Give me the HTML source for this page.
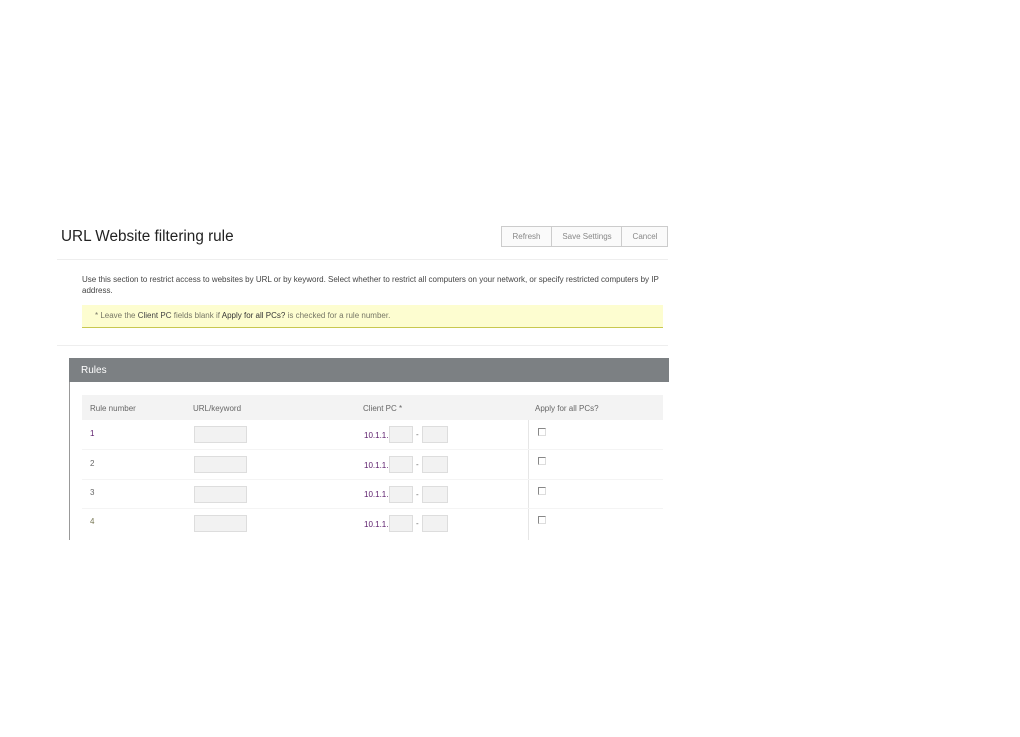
<!DOCTYPE html>
<html><head><style>
body{margin:0;width:1020px;height:737px;background:#fff;font-family:"Liberation Sans",sans-serif;position:relative;overflow:hidden}
.a{position:absolute}
.t{font-size:8px;color:#666}
.in{position:absolute;background:#f2f2f2;border:1px solid #ddd;box-sizing:border-box}
.cb{position:absolute;width:8px;height:8px;border:1px solid #888;border-right-color:#ddd;border-bottom-color:#ddd;box-sizing:border-box}
.ip{font-size:8px;color:#5a1a6a}
</style></head><body>
<div class="a" style="left:61px;top:228px;font-size:15.3px;color:#222">URL Website filtering rule</div>
<div class="a" style="left:501px;top:226px;width:167px;height:21px;border:1px solid #ccc;box-sizing:border-box;background:#fafafa;font-size:8px;color:#888">
<span class="a" style="left:0;width:49px;top:5px;text-align:center">Refresh</span>
<span class="a" style="left:49px;top:0;width:1px;height:19px;background:#ccc"></span>
<span class="a" style="left:50px;width:70px;top:5px;text-align:center">Save Settings</span>
<span class="a" style="left:119px;top:0;width:1px;height:19px;background:#ccc"></span>
<span class="a" style="left:120px;width:46px;top:5px;text-align:center">Cancel</span>
</div>
<div class="a" style="left:57px;top:259px;width:611px;height:1px;background:#eee"></div>
<div class="a t" style="left:82px;top:274px;width:590px;line-height:11px;color:#444">Use this section to restrict access to websites by URL or by keyword. Select whether to restrict all computers on your network, or specify restricted computers by IP address.</div>
<div class="a" style="left:82px;top:305px;width:581px;height:23px;background:#fdfdd0;border-bottom:1px solid #c8c850;box-sizing:border-box;font-size:8px;color:#776"><span class="a" style="left:13px;top:6px">* Leave the <b style="font-weight:normal;color:#444">Client PC</b> fields blank if <span style="color:#333">Apply for all PCs?</span> is checked for a rule number.</span></div>
<div class="a" style="left:57px;top:345px;width:611px;height:1px;background:#eee"></div>
<div class="a" style="left:69px;top:358px;width:600px;height:24px;background:#7c8083;color:#fff;font-size:10px"><span class="a" style="left:12px;top:7px">Rules</span></div>
<div class="a" style="left:69px;top:382px;width:1px;height:158px;background:#999"></div>
<div class="a" style="left:82px;top:395px;width:581px;height:25px;background:#f3f3f3"></div>
<div class="a t" style="left:90px;top:404px">Rule number</div>
<div class="a t" style="left:193px;top:404px">URL/keyword</div>
<div class="a t" style="left:363px;top:404px">Client PC *</div>
<div class="a t" style="left:535px;top:404px">Apply for all PCs?</div>
<div class="a" style="left:528px;top:420px;width:1px;height:120px;background:#e6e6e6"></div>
<div class="a" style="left:82px;top:449px;width:581px;height:1px;background:#f4f4f4"></div>
<div class="a" style="left:82px;top:479px;width:581px;height:1px;background:#f4f4f4"></div>
<div class="a" style="left:82px;top:508px;width:581px;height:1px;background:#f4f4f4"></div>

<div class="a t" style="left:90px;top:429px;color:#5a1a6a">1</div>
<div class="in" style="left:194px;top:426px;width:53px;height:17px"></div>
<div class="a ip" style="left:364px;top:431px">10.1.1.</div>
<div class="in" style="left:389px;top:426px;width:24px;height:17px"></div>
<div class="a t" style="left:416px;top:430px">-</div>
<div class="in" style="left:422px;top:426px;width:26px;height:17px"></div>
<div class="cb" style="left:538px;top:428px"></div>

<div class="a t" style="left:90px;top:459px">2</div>
<div class="in" style="left:194px;top:456px;width:53px;height:17px"></div>
<div class="a ip" style="left:364px;top:461px">10.1.1.</div>
<div class="in" style="left:389px;top:456px;width:24px;height:17px"></div>
<div class="a t" style="left:416px;top:460px">-</div>
<div class="in" style="left:422px;top:456px;width:26px;height:17px"></div>
<div class="cb" style="left:538px;top:457px"></div>

<div class="a t" style="left:90px;top:488px">3</div>
<div class="in" style="left:194px;top:486px;width:53px;height:17px"></div>
<div class="a ip" style="left:364px;top:490px">10.1.1.</div>
<div class="in" style="left:389px;top:486px;width:24px;height:17px"></div>
<div class="a t" style="left:416px;top:490px">-</div>
<div class="in" style="left:422px;top:486px;width:26px;height:17px"></div>
<div class="cb" style="left:538px;top:487px"></div>

<div class="a t" style="left:90px;top:517px;color:#775">4</div>
<div class="in" style="left:194px;top:515px;width:53px;height:17px"></div>
<div class="a ip" style="left:364px;top:520px">10.1.1.</div>
<div class="in" style="left:389px;top:515px;width:24px;height:17px"></div>
<div class="a t" style="left:416px;top:519px">-</div>
<div class="in" style="left:422px;top:515px;width:26px;height:17px"></div>
<div class="cb" style="left:538px;top:516px"></div>
</body></html>
